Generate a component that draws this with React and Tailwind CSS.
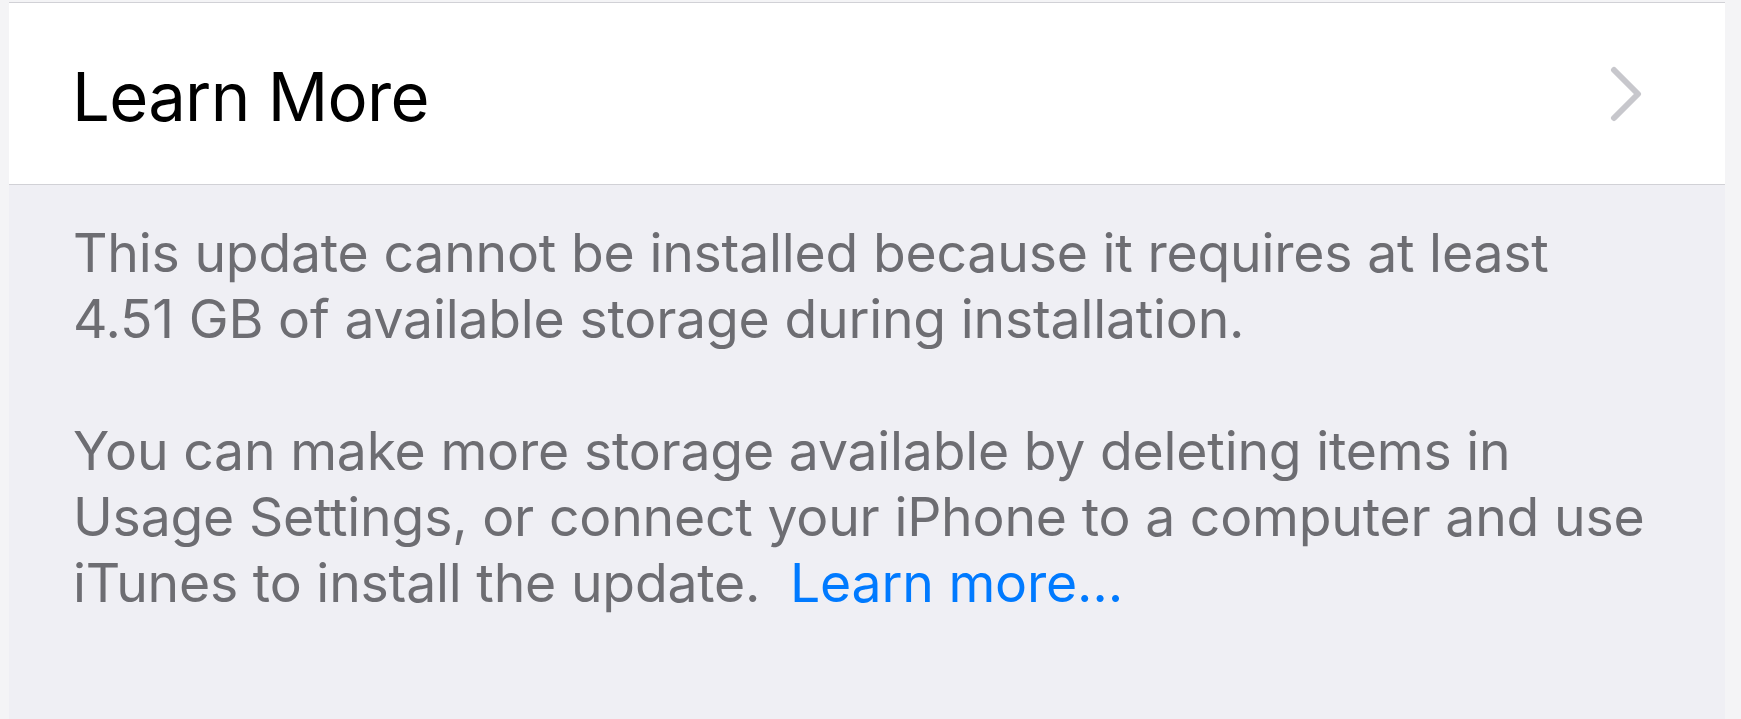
const Chevron = () => (
    <svg width="34" height="56" viewBox="0 0 34 56" fill="none">
        <path d="M5 4 L29 28 L5 52" stroke="#c7c7cc" strokeWidth="6" strokeLinecap="round" strokeLinejoin="round" />
    </svg>
);

const App = () => {
    return (
        <div className="flex w-[1741px] h-[719px] bg-[#f4f4f6] overflow-hidden" style={{ fontFamily: "Inter, 'Noto Sans', sans-serif" }}>
            <div className="w-[9px] shrink-0" />
            <main className="flex-1 min-w-0 overflow-hidden flex flex-col bg-[#efeff4]">
                <div className="h-[2px] bg-[#f4f4f6]" />
                <div className="flex items-center justify-between h-[183px] bg-white border-y border-[#d1d1d6] pl-[63px] pr-[82px]">
                    <h2 className="mt-[6px] text-[67px] leading-none tracking-[-0.7px] text-black">Learn More</h2>
                    <Chevron />
                </div>
                <div className="px-[64px] pt-[35px] text-[53.5px] leading-[66px] tracking-[-0.2px] text-[#6d6d72] whitespace-nowrap">
                    <p>
                        This update cannot be installed because it requires at least
                        <br />
                        4.51 GB of available storage during installation.
                    </p>
                    <p className="mt-[66px]">
                        You can make more storage available by deleting items in
                        <br />
                        Usage Settings, or connect your iPhone to a computer and use
                        <br />
                        iTunes to install the update.{"\u00a0 "}
                        <span className="text-[#007aff]">Learn more…</span>
                    </p>
                </div>
            </main>
            <div className="w-[16px] shrink-0" />
        </div>
    );
};

export default App;
